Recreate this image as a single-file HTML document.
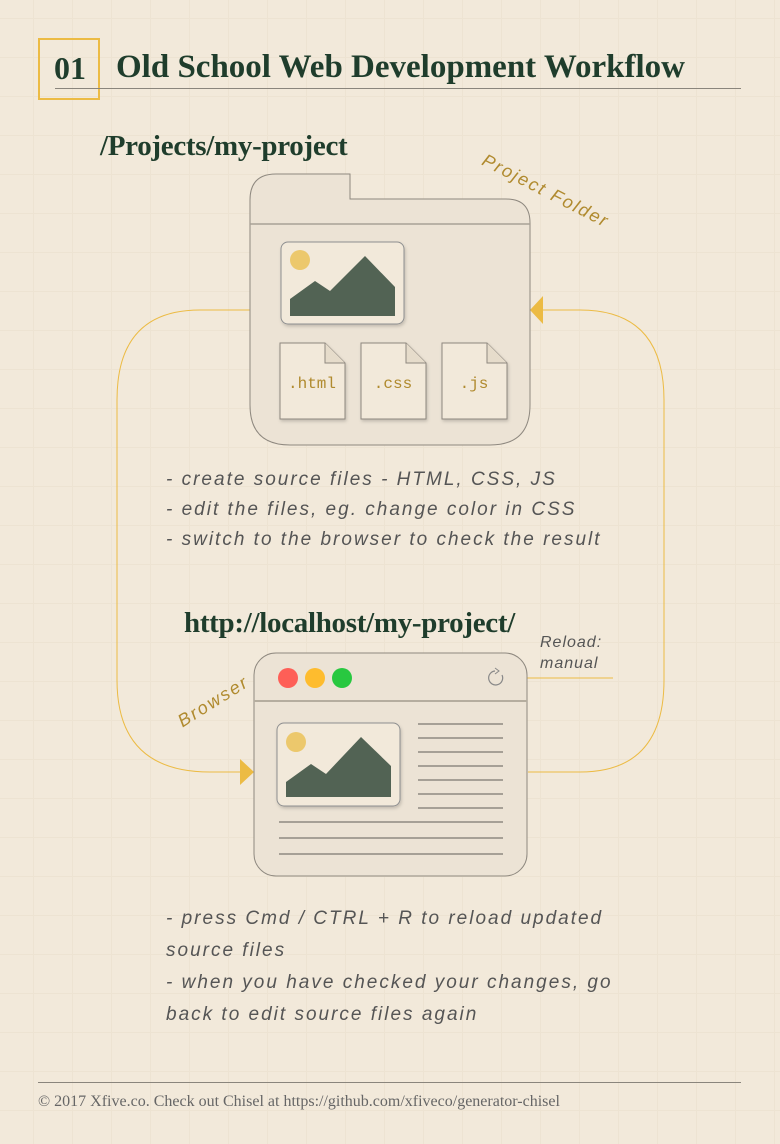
<!DOCTYPE html>
<html><head><meta charset="utf-8"><style>
html,body{margin:0;padding:0}
body{width:780px;height:1144px;position:relative;overflow:hidden;background:#f2e9da;
background-image:linear-gradient(#ede3d2 1px,transparent 1px),linear-gradient(90deg,#ede3d2 1px,transparent 1px);background-size:39px 39px;background-position:-6px 18px;font-family:"Liberation Serif",serif}
.t{position:absolute;color:#1f3d2c;font-weight:bold;white-space:nowrap}
.h{position:absolute;font-family:"Liberation Sans",sans-serif;font-style:italic;color:#555;font-size:19px;letter-spacing:2px;white-space:nowrap;font-weight:300}
</style></head><body>
<div style="position:absolute;left:38px;top:38px;width:62px;height:62px;border:2px solid #ecbb44;box-sizing:border-box"></div>
<div style="position:absolute;left:55px;top:88px;width:686px;height:1px;background:#8a857c"></div>
<div class="t" style="left:54px;top:50px;font-size:32px">01</div>
<div class="t" style="left:116px;top:49px;font-size:33px">Old School Web Development Workflow</div>
<div class="t" style="left:100px;top:130px;font-size:29px;letter-spacing:-0.3px">/Projects/my-project</div>
<div class="t" style="left:184px;top:607px;font-size:29px;letter-spacing:-0.3px">http://localhost/my-project/</div>
<div class="h" style="left:488px;top:150px;color:#b08a2e;font-size:18px;transform:rotate(27deg);transform-origin:0 0">Project Folder</div>
<div class="h" style="left:174px;top:714px;color:#b08a2e;font-size:18px;transform:rotate(-32deg);transform-origin:0 0">Browser</div>
<div class="h" style="left:540px;top:632px;font-size:16px;line-height:21px;letter-spacing:1px">Reload:<br>manual</div>
<svg style="position:absolute;left:0;top:0" width="780" height="1144">
<defs><filter id="s" x="-10%" y="-10%" width="130%" height="130%"><feDropShadow dx="1" dy="2" stdDeviation="1.5" flood-color="#000" flood-opacity="0.18"/></filter></defs>
<g fill="none" stroke="#ecbb44" stroke-width="1">
<path d="M250 310 H200 Q117 310 117 400 V680 Q117 772 210 772 H245"/>
<path d="M528 772 H580 Q664 772 664 680 V400 Q664 310 580 310 H540"/>
<path d="M613 678 H515"/>
</g>
<path d="M543 296 L530 310 L543 324Z" fill="#ecbb44"/>
<path d="M240 759 L254 772 L240 785Z" fill="#ecbb44"/>
<path d="M510 678 L516 675 L516 681Z" fill="#ecbb44"/>
<path d="M276 174 H350 V199 H506 Q530 199 530 223 V405 Q530 445 490 445 H290 Q250 445 250 405 V200 Q250 174 276 174Z" fill="#ece3d5" stroke="#8e887f"/>
<line x1="250" y1="224" x2="530" y2="224" stroke="#a8a196" stroke-width="1.5"/>
<rect x="281" y="242" width="123" height="82" rx="7" fill="#f2e9da" stroke="#8e8f90" filter="url(#s)"/>
<circle cx="300" cy="260" r="10" fill="#ecc86c"/>
<path d="M290 316 V299 L315 281 L330 291 L365 256 L395 287 V316Z" fill="#526354"/>
<g fill="#f2e9da" stroke="#8e887f">
<path d="M280 343 H325 L345 363 V419 H280Z" filter="url(#s)"/><path d="M325 343 V363 H345" fill="#e6dccb"/>
<path d="M361 343 H406 L426 363 V419 H361Z" filter="url(#s)"/><path d="M406 343 V363 H426" fill="#e6dccb"/>
<path d="M442 343 H487 L507 363 V419 H442Z" filter="url(#s)"/><path d="M487 343 V363 H507" fill="#e6dccb"/>
</g>
<g font-family="Liberation Mono,monospace" font-size="16" fill="#b08a2e" text-anchor="middle">
<text x="312" y="388">.html</text><text x="393" y="388">.css</text><text x="474" y="388">.js</text></g>
<rect x="254" y="653" width="273" height="223" rx="22" fill="#ece3d5" stroke="#8e887f"/>
<line x1="254" y1="701" x2="527" y2="701" stroke="#b5ad9f" stroke-width="2"/>
<circle cx="288" cy="678" r="10" fill="#fe5f57"/><circle cx="315" cy="678" r="10" fill="#febc2e"/><circle cx="342" cy="678" r="10" fill="#28c840"/>
<path d="M502 675 A7 7 0 1 1 495 671" fill="none" stroke="#888" stroke-width="1.2"/><path d="M495 668 L499 671 L495 674" fill="none" stroke="#888"/>
<rect x="277" y="723" width="123" height="83" rx="7" fill="#f2e9da" stroke="#8e8f90" filter="url(#s)"/>
<circle cx="296" cy="742" r="10" fill="#ecc86c"/>
<path d="M286 797 V782 L311 764 L326 774 L361 737 L391 766 V797Z" fill="#526354"/>
<g stroke="#7d7870" stroke-width="1.2">
<line x1="418" y1="724" x2="503" y2="724"/><line x1="418" y1="738" x2="503" y2="738"/><line x1="418" y1="752" x2="503" y2="752"/><line x1="418" y1="766" x2="503" y2="766"/><line x1="418" y1="780" x2="503" y2="780"/><line x1="418" y1="794" x2="503" y2="794"/><line x1="418" y1="808" x2="503" y2="808"/>
<line x1="279" y1="822" x2="503" y2="822"/><line x1="279" y1="838" x2="503" y2="838"/><line x1="279" y1="854" x2="503" y2="854"/>
</g>
</svg>
<div class="h" style="left:166px;top:465px;line-height:30px">- create source files - HTML, CSS, JS<br>- edit the files, eg. change color in CSS<br>- switch to the browser to check the result</div>
<div class="h" style="left:166px;top:903px;line-height:32px">- press Cmd / CTRL + R to reload updated<br>source files<br>- when you have checked your changes, go<br>back to edit source files again</div>
<div style="position:absolute;left:38px;top:1082px;width:703px;height:1px;background:#8a857c"></div>
<div style="position:absolute;left:38px;top:1093px;font-size:16px;color:#666">© 2017 Xfive.co. Check out Chisel at https://github.com/xfiveco/generator-chisel</div>
</body></html>
